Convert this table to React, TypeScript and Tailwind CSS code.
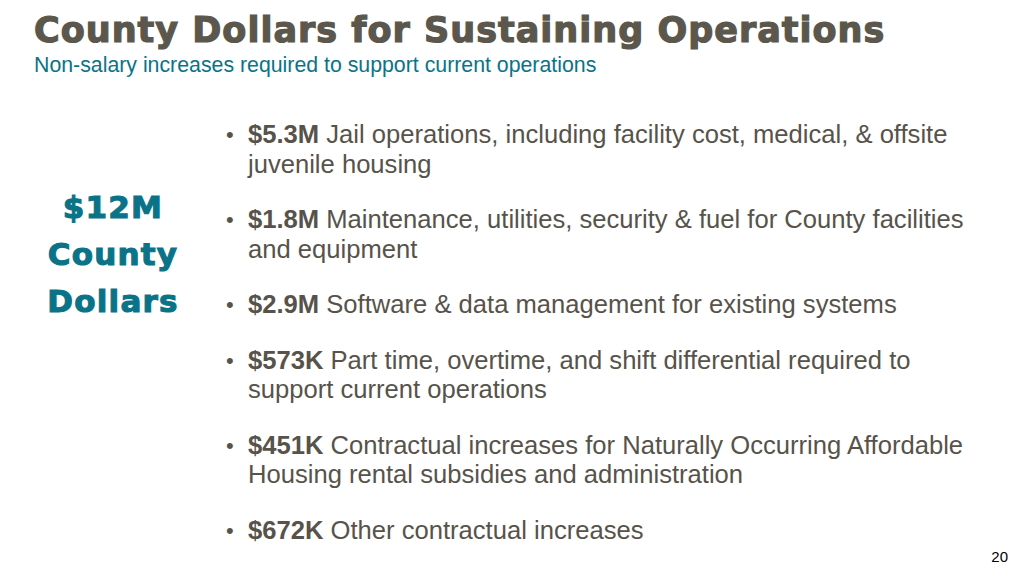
import React from "react";

const items: { amt: string; text: string }[] = [
  { amt: "$5.3M", text: "Jail operations, including facility cost, medical, & offsite juvenile housing" },
  { amt: "$1.8M", text: "Maintenance, utilities, security & fuel for County facilities and equipment" },
  { amt: "$2.9M", text: "Software & data management for existing systems" },
  { amt: "$573K", text: "Part time, overtime, and shift differential required to support current operations" },
  { amt: "$451K", text: "Contractual increases for Naturally Occurring Affordable Housing rental subsidies and administration" },
  { amt: "$672K", text: "Other contractual increases" },
];

export default function App() {
  return (
    <div className="relative w-[1024px] h-[576px] bg-white overflow-hidden [font-family:'Liberation_Sans',Arial,sans-serif]">
      <header className="pl-[34px] pt-[10px]">
        <h1 className="text-[35px] leading-[40px] font-bold tracking-[1px] text-[#5b574c] whitespace-nowrap [font-family:'DejaVu_Sans',sans-serif] [-webkit-text-stroke:1.2px_#5b574c]">
          County Dollars for Sustaining Operations
        </h1>
        <p className="mt-[3px] text-[21.3px] leading-[24px] text-[#0a7388]">
          Non-salary increases required to support current operations
        </p>
      </header>
      <main className="flex mt-[43px]">
        <div className="w-[226px] shrink-0 flex justify-center">
          <div className="mt-[64px] text-center text-[31px] leading-[47px] font-bold tracking-[1.2px] text-[#0a7388] [font-family:'DejaVu_Sans',sans-serif] [-webkit-text-stroke:1.1px_#0a7388]">
            <div>$12M</div>
            <div>County</div>
            <div>Dollars</div>
          </div>
        </div>
        <ul className="flex flex-col gap-[26px] w-[752px]">
          {items.map((it) => (
            <li key={it.amt} className="flex text-[25.6px] leading-[29.5px] text-[#57534a]">
              <span className="w-[22px] shrink-0 text-[22px]">•</span>
              <p className="flex-1">
                <b className="font-bold">{it.amt}</b> {it.text}
              </p>
            </li>
          ))}
        </ul>
      </main>
      <div className="absolute right-[16px] bottom-[12px] text-[15px] leading-[15px] text-black">20</div>
    </div>
  );
}
